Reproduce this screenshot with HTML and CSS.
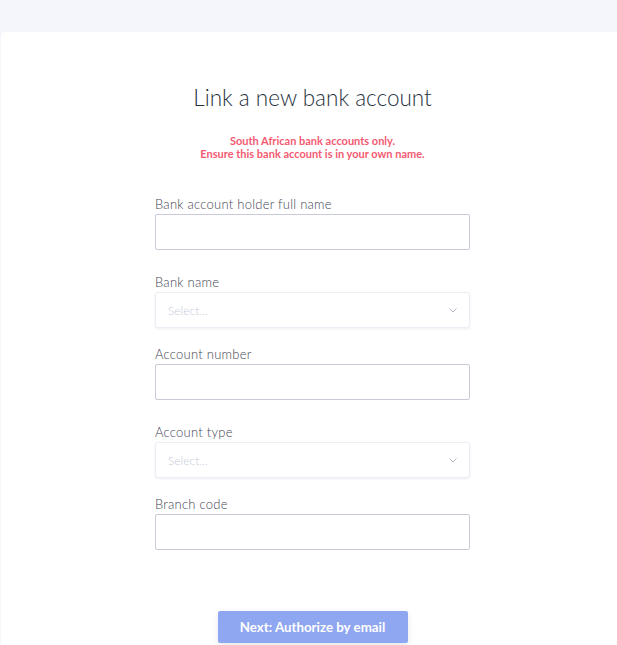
FILE: index.html
```html
<!DOCTYPE html>
<html lang="en">
<head>
<meta charset="utf-8">
<title>Link a new bank account</title>
<link rel="stylesheet" href="styles.css">
</head>
<body>
<main class="card">
  <h1 class="title">Link a new bank account</h1>
  <p class="notice">South African bank accounts only.<br>Ensure this bank account is in your own name.</p>
  <form class="form">
    <div class="group group-input">
      <label class="label">Bank account holder full name</label>
      <input class="input" type="text">
    </div>
    <div class="group group-select">
      <label class="label">Bank name</label>
      <div class="select"><span class="placeholder">Select...</span><svg class="chev" width="8" height="5" viewBox="0 0 8 5"><polyline points="0.5,0.5 4,4 7.5,0.5" fill="none" stroke="#b3b7c3" stroke-width="1"/></svg></div>
    </div>
    <div class="group group-input">
      <label class="label">Account number</label>
      <input class="input" type="text">
    </div>
    <div class="group group-select">
      <label class="label">Account type</label>
      <div class="select"><span class="placeholder">Select...</span><svg class="chev" width="8" height="5" viewBox="0 0 8 5"><polyline points="0.5,0.5 4,4 7.5,0.5" fill="none" stroke="#b3b7c3" stroke-width="1"/></svg></div>
    </div>
    <div class="group group-last">
      <label class="label">Branch code</label>
      <input class="input" type="text">
    </div>
  </form>
  <div class="actions">
    <button class="btn" type="button">Next: Authorize by email</button>
  </div>
</main>
</body>
</html>
```

FILE: styles.css
```css
html, body {
  margin: 0;
  padding: 0;
}
body {
  background: #f5f6fb;
  font-family: Lato, "Open Sans", sans-serif;
  overflow: hidden;
}
.card {
  margin: 32px 0 0 1px;
  width: 623px;
  min-height: 700px;
  background: #ffffff;
  border-radius: 4px 0 0 0;
  padding-top: 51px;
  box-sizing: border-box;
}
.title {
  margin: 0;
  font-size: 22.5px;
  line-height: 29px;
  font-weight: 300;
  color: #27323d;
  text-align: center;
}
.notice {
  margin: 22px 0 0;
  font-size: 11px;
  line-height: 13px;
  font-weight: 700;
  color: #f45a72;
  text-align: center;
}
.form {
  width: 315px;
  margin: 37px auto 0;
  display: flex;
  flex-direction: column;
}
.group {
  display: flex;
  flex-direction: column;
}
.group-input { margin-bottom: 25px; }
.group-select { margin-bottom: 19px; }
.group-last { margin-bottom: 0; }
.label {
  font-size: 13px;
  line-height: 14px;
  font-weight: 300;
  letter-spacing: 0.25px;
  color: #3f4654;
  margin-bottom: 3px;
}
.input {
  display: block;
  box-sizing: border-box;
  width: 100%;
  height: 36px;
  margin: 0;
  border: 1px solid #c9cbd8;
  border-radius: 2px;
  background: #fff;
  outline: none;
}
.select {
  box-sizing: border-box;
  height: 36px;
  border: 1px solid #eceef5;
  border-radius: 3px;
  background: #fff;
  box-shadow: 0 1px 3px rgba(30, 40, 80, 0.08);
  display: flex;
  align-items: center;
  justify-content: space-between;
  padding: 0 12px 0 12px;
}
.placeholder {
  font-size: 12px;
  font-weight: 300;
  color: #c7cbd9;
}
.chev {
  display: block;
  margin-top: 1px;
}
.actions {
  display: flex;
  justify-content: center;
  margin-top: 61px;
}
.btn {
  width: 190px;
  height: 32px;
  border: none;
  border-radius: 2px;
  background: #8fa6f0;
  color: #ffffff;
  font-family: Lato, "Open Sans", sans-serif;
  font-size: 13.3px;
  font-weight: 700;
  box-shadow: 0 3px 6px rgba(60, 70, 110, 0.12);
  padding: 0;
}
```
